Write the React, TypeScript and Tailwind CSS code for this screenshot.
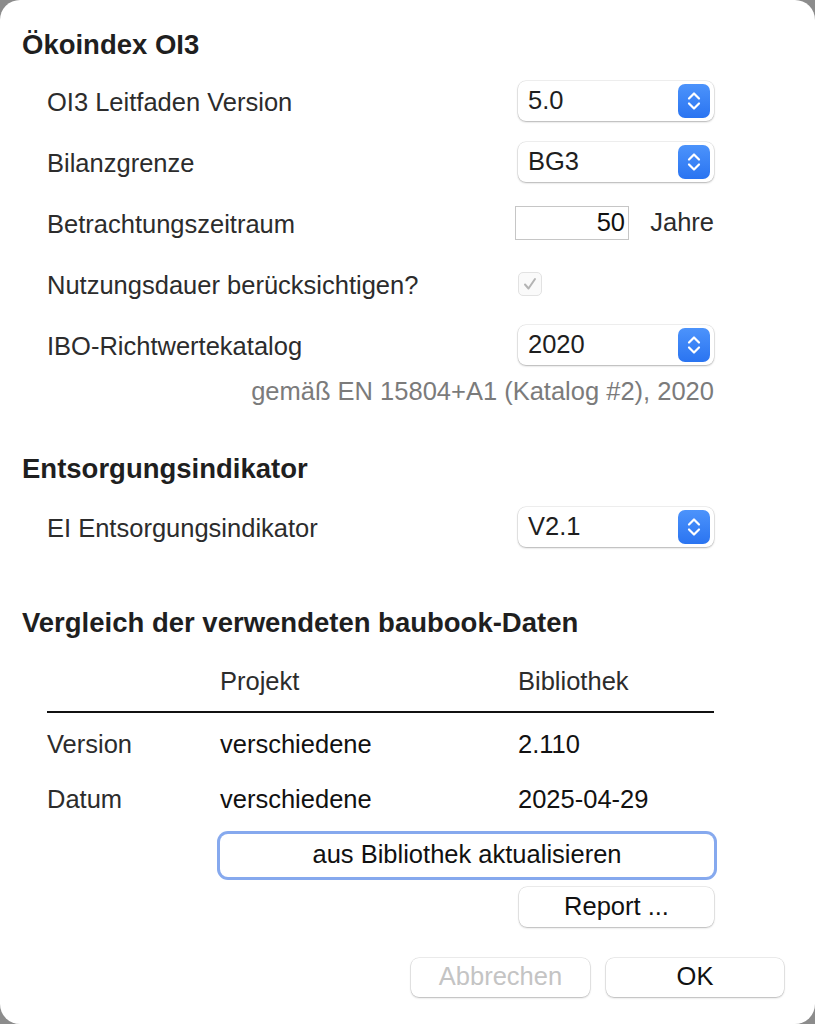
import React from "react";

const font = "font-['Liberation_Sans','Helvetica',sans-serif]";

function Stepper() {
  return (
    <div className="flex h-[34px] w-[32px] items-center justify-center rounded-[7px] bg-gradient-to-b from-[#4c93fb] to-[#2a74f1]">
      <svg width="32" height="34" viewBox="0 0 32 34" fill="none">
        <path
          d="M11 14.5 L16 9.5 L21 14.5"
          stroke="white"
          strokeWidth="2.2"
          strokeLinecap="round"
          strokeLinejoin="round"
        />
        <path
          d="M11 19.5 L16 24.5 L21 19.5"
          stroke="white"
          strokeWidth="2.2"
          strokeLinecap="round"
          strokeLinejoin="round"
        />
      </svg>
    </div>
  );
}

function Select({ value }: { value: string }) {
  return (
    <div className="flex h-[40px] w-[196px] items-center justify-between rounded-[8px] bg-white pl-[10px] pr-[4px] shadow-[0_0_0_0.5px_rgba(0,0,0,0.12),0_1px_2px_rgba(0,0,0,0.25)]">
      <span className="text-[25.5px] text-[#1e1e1e]">{value}</span>
      <Stepper />
    </div>
  );
}

function Row({
  label,
  children,
}: {
  label: string;
  children: React.ReactNode;
}) {
  return (
    <div className="flex h-[61px] items-center justify-between pl-[47px] pr-[101px]">
      <span className="pt-[4px] text-[25.5px] text-[#2c2c2c]">{label}</span>
      {children}
    </div>
  );
}

function Heading({ children }: { children: React.ReactNode }) {
  return (
    <h2 className="pl-[22px] text-[27.5px] font-bold text-[#1f1f1f]">
      {children}
    </h2>
  );
}

function Button({
  children,
  className = "",
}: {
  children: React.ReactNode;
  className?: string;
}) {
  return (
    <div
      className={`flex items-center justify-center rounded-[8px] bg-white text-[25.5px] shadow-[0_0_0_0.5px_rgba(0,0,0,0.14),0_1px_2px_rgba(0,0,0,0.22)] ${className}`}
    >
      {children}
    </div>
  );
}

export default function App() {
  return (
    <div className={`h-[1024px] w-[815px] bg-[#8c8c8c] ${font}`}>
      <div className="flex h-full flex-col rounded-[20px] bg-white leading-none">
        {/* Ökoindex */}
        <div className="pt-[31px]">
          <Heading>Ökoindex OI3</Heading>
        </div>

        <div className="mt-[12px]">
          <Row label="OI3 Leitfaden Version">
            <Select value="5.0" />
          </Row>
          <Row label="Bilanzgrenze">
            <Select value="BG3" />
          </Row>
          <Row label="Betrachtungszeitraum">
            <div className="flex w-[199px] items-center justify-between">
              <div className="flex h-[34px] w-[114px] items-center justify-end border border-[#c6c6c6] bg-white pr-[3px] text-[25.5px] text-[#111]">
                50
              </div>
              <span className="text-[25.5px] text-[#2c2c2c]">Jahre</span>
            </div>
          </Row>
          <Row label="Nutzungsdauer berücksichtigen?">
            <div className="flex w-[196px] items-center">
              <div className="flex h-[24px] w-[24px] items-center justify-center rounded-[5px] border border-[#e2e2e2] bg-[#fafafa]">
                <svg width="16" height="16" viewBox="0 0 16 16" fill="none">
                  <path
                    d="M3 8.5 L6.5 12.5 L13 3"
                    stroke="#b4b4b4"
                    strokeWidth="2"
                    strokeLinecap="round"
                    strokeLinejoin="round"
                  />
                </svg>
              </div>
            </div>
          </Row>
          <Row label="IBO-Richtwertekatalog">
            <Select value="2020" />
          </Row>
        </div>

        <div className="mt-[3px] pr-[101px] text-right text-[25.5px] text-[#7b7b7b]">
          gemäß EN 15804+A1 (Katalog #2), 2020
        </div>

        {/* Entsorgungsindikator */}
        <div className="mt-[51px]">
          <Heading>Entsorgungsindikator</Heading>
        </div>
        <div className="mt-[14px]">
          <Row label="EI Entsorgungsindikator">
            <Select value="V2.1" />
          </Row>
        </div>

        {/* Vergleich */}
        <div className="mt-[51px]">
          <Heading>Vergleich der verwendeten baubook-Daten</Heading>
        </div>

        <div className="mt-[33px] pl-[47px] pr-[101px] text-[25.5px]">
          <div className="grid grid-cols-[173px_298px_1fr] border-b-2 border-[#111] pb-[16px] text-[#2c2c2c]">
            <span />
            <span>Projekt</span>
            <span>Bibliothek</span>
          </div>
          <div className="grid h-[64px] grid-cols-[173px_298px_1fr] items-center">
            <span className="text-[#2c2c2c]">Version</span>
            <span className="text-[#111]">verschiedene</span>
            <span className="text-[#111]">2.110</span>
          </div>
          <div className="grid h-[46px] grid-cols-[173px_298px_1fr] items-center">
            <span className="text-[#2c2c2c]">Datum</span>
            <span className="text-[#111]">verschiedene</span>
            <span className="text-[#111]">2025-04-29</span>
          </div>

          <div className="mt-[11px] flex flex-col items-end">
            <Button className="h-[43px] w-[494px] text-[#111] shadow-[0_0_0_3px_#86a9ee,0_1px_2px_rgba(0,0,0,0.2)]">
              aus Bibliothek aktualisieren
            </Button>
            <Button className="mt-[10px] h-[40px] w-[195px] text-[#111]">
              Report ...
            </Button>
          </div>
        </div>

        <div className="mt-[31px] flex justify-end gap-[16px] pr-[31px]">
          <Button className="h-[39px] w-[179px] text-[#c4c4c4]">Abbrechen</Button>
          <Button className="h-[39px] w-[178px] text-[#111]">OK</Button>
        </div>
      </div>
    </div>
  );
}
